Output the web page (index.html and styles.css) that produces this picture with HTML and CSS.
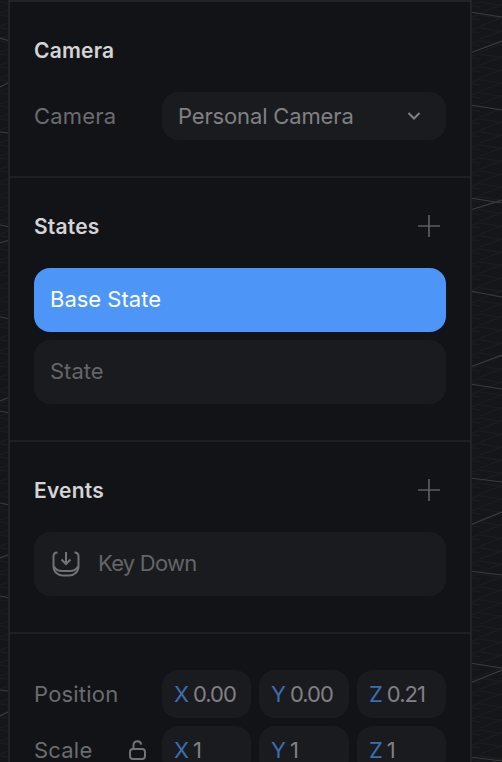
FILE: index.html
```html
<!DOCTYPE html>
<html lang="en">
<head>
<meta charset="utf-8">
<title>Properties</title>
<link rel="stylesheet" href="styles.css">
</head>
<body>
<svg class="canvas" width="502" height="762" viewBox="0 0 502 762" aria-hidden="true">
  <defs>
    <pattern id="mesh" width="32" height="13" patternUnits="userSpaceOnUse">
      <path d="M0 2 32 7M0 13 32 1" class="fine"/>
    </pattern>
  </defs>
  <rect width="502" height="762" fill="url(#mesh)"/>
  <g class="bright">
    <path d="M470 12 502 17M470 53 502 41M470 105 502 110M470 198 502 203M470 210 502 200M470 291 502 297M470 367 502 355M470 384 502 389M470 478 502 482M470 525 502 512M470 571 502 575M470 663 502 668M470 683 502 670M470 757 502 761"/>
    <path d="M0 38 10 41M0 87 10 82M0 132 10 133M0 225 10 227M0 243 10 240M0 317 10 319M0 401 10 397M0 411 10 413M0 503 10 505M0 558 10 554M0 596 10 598M0 690 10 691M0 716 10 711"/>
  </g>
</svg>
<aside class="panel">
  <section class="section">
    <div class="head"><h2 class="title">Camera</h2></div>
    <div class="row">
      <span class="label">Camera</span>
      <div class="field select">
        <span>Personal Camera</span>
        <svg class="chev" width="14" height="8" viewBox="0 0 14 8"><path d="M1.500 1 7 6.500 12.500 1"/></svg>
      </div>
    </div>
  </section>
  <section class="section">
    <div class="head">
      <h2 class="title">States</h2>
      <svg class="plus" width="22" height="22" viewBox="0 0 22 22"><path d="M11 0V22M0 11H22"/></svg>
    </div>
    <div class="list">
      <div class="item active">Base State</div>
      <div class="item">State</div>
    </div>
  </section>
  <section class="section">
    <div class="head">
      <h2 class="title">Events</h2>
      <svg class="plus" width="22" height="22" viewBox="0 0 22 22"><path d="M11 0V22M0 11H22"/></svg>
    </div>
    <div class="list">
      <div class="item event">
        <svg class="key" width="28" height="26" viewBox="0 0 28 26"><path d="M5.500 1.500C3 1.500 1.500 3 1.500 5.500V15C1.500 21 6 24.500 11 24.500H17C22 24.500 26.500 21 26.500 15V5.500C26.500 3 25 1.500 22.500 1.500"/><path d="M2 15.500C3.500 18.500 6.500 20 10 20H18C21.500 20 24.500 18.500 26 15.500"/><path d="M14 1V12.500M9.500 8.500 14 13 18.500 8.500"/></svg>
        <span class="event-name">Key Down</span>
      </div>
    </div>
  </section>
  <section class="section last">
    <div class="rows">
      <div class="row">
        <span class="label">Position</span>
        <div class="triple">
          <div class="field num"><b>X</b>0.00</div>
          <div class="field num"><b>Y</b>0.00</div>
          <div class="field num"><b>Z</b>0.21</div>
        </div>
      </div>
      <div class="row">
        <span class="label label-lock">Scale
          <svg class="lock" width="17" height="20" viewBox="0 0 17 20"><path d="M4.500 9V5C4.500 2.800 6.200 1.200 8.300 1.200C10.400 1.200 12 2.600 12.300 4.600"/><rect x="1" y="9" width="15" height="10" rx="3"/></svg>
        </span>
        <div class="triple">
          <div class="field num"><b>X</b>1</div>
          <div class="field num"><b>Y</b>1</div>
          <div class="field num"><b>Z</b>1</div>
        </div>
      </div>
    </div>
  </section>
</aside>
</body>
</html>
```
FILE: styles.css
```css
* { box-sizing: border-box; }
html, body { margin: 0; height: 762px; overflow: hidden; }
body {
  position: relative;
  background: #151619;
  font-family: Inter, "Noto Sans", sans-serif;
  font-size: 22px;
  color: #77787b;
}
.canvas { position: absolute; inset: 0; }
.fine { stroke: #1c1d20; stroke-width: 1; fill: none; }
.bright path { stroke: #3a3b3e; stroke-width: 1.200; fill: none; }
.panel {
  position: relative;
  width: 464px;
  margin-left: 8px;
  height: 762px;
  overflow: hidden;
  background: #121317;
  border: 2px solid #222327;
  border-bottom: 0;
}
.section { padding: 36px 24px; border-bottom: 2px solid #1f2024; }
.last { border-bottom: 0; }
.head { height: 24px; display: flex; align-items: center; justify-content: space-between; margin-bottom: 30px; }
.title { margin: 0; padding-top: 2px; font-size: 21px; line-height: 24px; font-weight: 600; color: #d4d4d5; letter-spacing: 0.2px; }
.plus { margin-right: 6px; }
.plus path { stroke: #5c5d60; stroke-width: 1.700; fill: none; }
.row { display: grid; grid-template-columns: 128px 284px; height: 48px; align-items: center; }
.rows { display: flex; flex-direction: column; gap: 8px; }
.label { font-size: 22px; color: #6b6c6f; letter-spacing: 0.2px; }
.label-lock { display: flex; align-items: center; justify-content: space-between; padding-right: 16px; }
.field { background: #1a1b1f; border-radius: 16px; height: 48px; display: flex; align-items: center; color: #808184; }
.select { padding: 0 25px 0 16px; justify-content: space-between; letter-spacing: -0.15px; }
.chev path { stroke: #808184; stroke-width: 2; fill: none; }
.list { display: flex; flex-direction: column; gap: 8px; }
.item { height: 64px; border-radius: 16px; background: #1a1b1f; padding: 0 16px 2px; display: flex; align-items: center; color: #646568; }
.active { background: #4d96f7; color: #fff; }
.event { gap: 18px; }
.event-name { letter-spacing: -0.75px; }
.key { margin-left: 2px; margin-top: 2px; }
.key path { stroke: #727376; stroke-width: 2; fill: none; }
.lock path, .lock rect { stroke: #727376; stroke-width: 2; fill: none; }
.triple { display: grid; grid-template-columns: 89px 90px 89px; gap: 8px; height: 48px; }
.num { padding-left: 12px; gap: 5px; letter-spacing: -1px; }
.num b { font-weight: 400; color: #3c6fb0; }
```
